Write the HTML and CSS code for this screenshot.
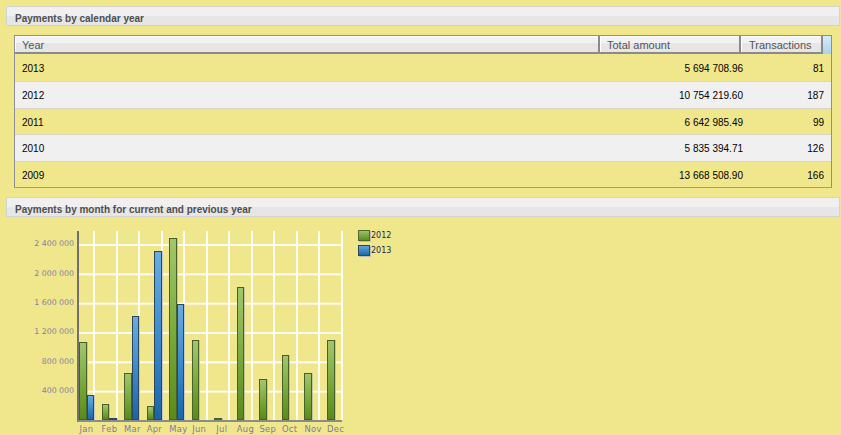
FILE: index.html
```html
<!DOCTYPE html>
<html>
<head>
<meta charset="utf-8">
<title>Payments</title>
<link rel="stylesheet" href="styles.css">
</head>
<body>
<div class="panel-head">Payments by calendar year</div>
<div class="grid">
  <div class="grid-head">
    <div class="hcell hc-year">Year</div>
    <div class="hcell hc-amount">Total amount</div>
    <div class="hcell hc-trans">Transactions</div>
    <div class="hcell hc-corner"></div>
  </div>
  <div class="row first"><div class="c-year">2013</div><div class="c-amount">5 694 708.96</div><div class="c-trans">81</div></div>
  <div class="row alt"><div class="c-year">2012</div><div class="c-amount">10 754 219.60</div><div class="c-trans">187</div></div>
  <div class="row"><div class="c-year">2011</div><div class="c-amount">6 642 985.49</div><div class="c-trans">99</div></div>
  <div class="row alt"><div class="c-year">2010</div><div class="c-amount">5 835 394.71</div><div class="c-trans">126</div></div>
  <div class="row last"><div class="c-year">2009</div><div class="c-amount">13 668 508.90</div><div class="c-trans">166</div></div>
</div>
<div class="panel-head second">Payments by month for current and previous year</div>
<div class="chart">
  <div class="chart-main">
    <div class="chart-body">
      <div class="yaxis">
        <span class="ylabel" style="bottom:176px">2 400 000</span>
        <span class="ylabel" style="bottom:146.7px">2 000 000</span>
        <span class="ylabel" style="bottom:117.3px">1 600 000</span>
        <span class="ylabel" style="bottom:88px">1 200 000</span>
        <span class="ylabel" style="bottom:58.7px">800 000</span>
        <span class="ylabel" style="bottom:29.3px">400 000</span>
      </div>
      <div class="plot">
        <div class="month first"><div class="bar g" style="height:78.3px"></div><div class="bar b" style="height:25.7px"></div></div>
        <div class="month"><div class="bar g" style="height:16.7px"></div><div class="bar b" style="height:1.5px"></div></div>
        <div class="month"><div class="bar g" style="height:47.7px"></div><div class="bar b" style="height:104.7px"></div></div>
        <div class="month"><div class="bar g" style="height:14.3px"></div><div class="bar b" style="height:169.3px"></div></div>
        <div class="month"><div class="bar g" style="height:182px"></div><div class="bar b" style="height:116.3px"></div></div>
        <div class="month"><div class="bar g" style="height:80.7px"></div><div class="bar none"></div></div>
        <div class="month"><div class="bar g" style="height:1.5px"></div><div class="bar none"></div></div>
        <div class="month"><div class="bar g" style="height:133.7px"></div><div class="bar none"></div></div>
        <div class="month"><div class="bar g" style="height:41px"></div><div class="bar none"></div></div>
        <div class="month"><div class="bar g" style="height:65px"></div><div class="bar none"></div></div>
        <div class="month"><div class="bar g" style="height:47.7px"></div><div class="bar none"></div></div>
        <div class="month"><div class="bar g" style="height:80px"></div><div class="bar none"></div></div>
      </div>
    </div>
    <div class="xaxis">
      <span class="xl first">Jan</span><span class="xl">Feb</span><span class="xl">Mar</span><span class="xl">Apr</span><span class="xl">May</span><span class="xl">Jun</span><span class="xl">Jul</span><span class="xl">Aug</span><span class="xl">Sep</span><span class="xl">Oct</span><span class="xl">Nov</span><span class="xl">Dec</span>
    </div>
  </div>
  <div class="legend">
    <div class="li"><span class="sw g"></span>2012</div>
    <div class="li"><span class="sw b"></span>2013</div>
  </div>
</div>
</body>
</html>
```
FILE: styles.css
```css
html, body {
  margin: 0;
  padding: 0;
  background: #f0e68c;
  font-family: "Liberation Sans", Arial, sans-serif;
  overflow: hidden;
}
body {
  width: 841px;
  height: 435px;
}
.panel-head {
  margin: 6px 1px 0 6px;
  height: 13px;
  padding: 5px 0 0 8px;
  line-height: 13px;
  border: 1px solid #d3d3cf;
  background: linear-gradient(to bottom, #f0f0f0 0, #f0f0f0 50%, #e6e6e6 50%, #e6e6e6 100%);
  font-size: 10px;
  font-weight: bold;
  color: #4e4e4e;
}
.panel-head.second {
  margin-top: 9px;
}
.grid {
  margin: 9px 9px 0 14px;
  border: 1px solid #8e8e96;
  border-bottom-color: #9a9aa2;
}
.grid-head {
  display: grid;
  grid-template-columns: 585px 141px 82px 1fr;
  height: 18px;
}
.hcell {
  box-sizing: border-box;
  height: 18px;
  line-height: 18px;
  padding-left: 7px;
  font-size: 11px;
  color: #555;
  background: linear-gradient(to bottom, #f2f2f2 0, #f2f2f2 45%, #e6e6e6 45%, #e6e6e6 100%);
  border-right: 2px solid #8a8a8a;
  border-bottom: 2px solid #8a8a8a;
  box-shadow: inset 1px 1px 0 #fff;
}
.hc-trans {
  padding-left: 8px;
}
.hc-corner {
  border-right: none;
  border-bottom: none;
  box-shadow: none;
  background: linear-gradient(to bottom, #d4ebfa 0, #a8d3f0 100%);
}
.row {
  display: grid;
  grid-template-columns: 585px 149px 1fr;
  height: 25.4px;
  line-height: 27px;
  border-bottom: 1px solid #d9d6c4;
  font-size: 10px;
  color: #000;
  background: #f0e68c;
}
.row.first {
  height: 27.4px;
  line-height: 29px;
}
.row.alt {
  background: #f0f0f0;
}
.row.last {
  border-bottom: none;
  height: 25.8px;
  line-height: 27px;
}
.c-year {
  padding-left: 7px;
}
.c-amount {
  text-align: right;
  padding-right: 6px;
}
.c-trans {
  text-align: right;
  padding-right: 7px;
}
.chart {
  display: flex;
  align-items: flex-start;
  margin-top: 14px;
}
.chart-body {
  display: flex;
}
.yaxis {
  position: relative;
  width: 77px;
  height: 189px;
}
.ylabel {
  position: absolute;
  right: 3px;
  transform: translateY(50%);
  font-family: "DejaVu Sans", Verdana, sans-serif;
  font-size: 7.8px;
  line-height: 10px;
  color: #8282a2;
  white-space: nowrap;
}
.plot {
  display: flex;
  align-items: flex-end;
  width: 263px;
  height: 189px;
  border-left: 2px solid #707070;
  border-bottom: 2px solid #8b8b8b;
  background-image: linear-gradient(to top, transparent 0, transparent 27.6px, rgba(255,255,255,0.9) 27.6px, rgba(255,255,255,0.9) 29.33px);
  background-size: 100% 29.33px;
  background-position: left bottom;
  background-repeat: repeat-y;
}
.month {
  position: relative;
  box-sizing: border-box;
  display: flex;
  align-items: flex-end;
  width: 22.55px;
  height: 100%;
  padding-left: 7.55px;
}
.month.first {
  width: 15px;
  padding-left: 0;
}
.month::after {
  content: "";
  position: absolute;
  top: 0;
  bottom: 0;
  right: -1px;
  width: 2px;
  background: rgba(255,255,255,0.9);
}
.bar {
  position: relative;
  z-index: 1;
  box-sizing: border-box;
  width: 7.5px;
  border: 1px solid #48602c;
  box-shadow: 1px 0 0 rgba(180,180,170,0.7);
}
.bar.g {
  background: linear-gradient(to bottom, #a2c66c 0, #78a83a 55%, #5a8a1a 100%);
}
.bar.b {
  border-color: #2c4660;
  background: linear-gradient(to bottom, #68ade0 0, #3a88c8 55%, #1a66a6 100%);
}
.bar.none {
  border: none;
  box-shadow: none;
  height: 0;
}
.xaxis {
  display: flex;
  margin-left: 79px;
  padding-top: 2px;
  height: 11px;
}
.xl {
  box-sizing: border-box;
  width: 22.55px;
  padding-left: 7.55px;
  text-align: center;
  white-space: nowrap;
  font-family: "DejaVu Sans", Verdana, sans-serif;
  font-size: 8.4px;
  letter-spacing: 0.3px;
  line-height: 11px;
  color: #7c7c9c;
}
.xl.first {
  width: 15px;
  padding-left: 0;
}
.legend {
  margin-left: 16px;
  margin-top: -1px;
}
.li {
  display: flex;
  align-items: center;
  height: 11px;
  margin-bottom: 4px;
  font-family: "DejaVu Sans", Verdana, sans-serif;
  font-size: 8px;
  color: #1e1e44;
}
.sw {
  box-sizing: border-box;
  width: 12px;
  height: 11px;
  border: 1px solid #4e6630;
  box-shadow: 1px 1px 0 rgba(180,180,170,0.8);
  margin-right: 1px;
}
.sw.g {
  background: linear-gradient(to bottom, #9cc264, #5e8e1e);
}
.sw.b {
  border-color: #2c4660;
  background: linear-gradient(to bottom, #5ea6dc, #1e6aaa);
}
```
